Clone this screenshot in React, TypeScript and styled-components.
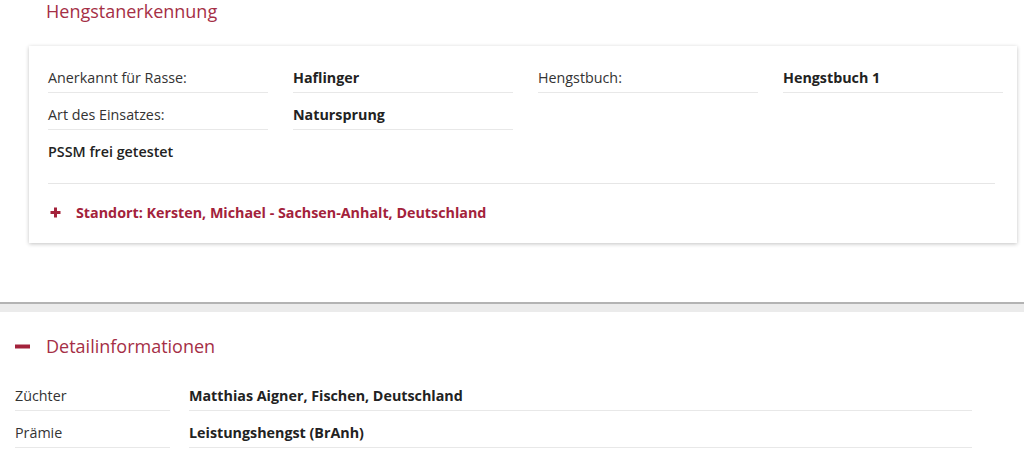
import React from 'react';
import styled, {createGlobalStyle} from "styled-components";

const accent = '#a3223b';

const GlobalStyle = createGlobalStyle`
    body {
        margin: 0;
        background: #fff;
        font-family: 'Open Sans', 'Liberation Sans', sans-serif;
        color: #222;
    }
`

type Field = { label: string; value?: string };

const recognition: Field[][] = [
    [{label: 'Anerkannt für Rasse:', value: 'Haflinger'}, {label: 'Hengstbuch:', value: 'Hengstbuch 1'}],
    [{label: 'Art des Einsatzes:', value: 'Natursprung'}],
];

const details: Field[] = [
    {label: 'Züchter', value: 'Matthias Aigner, Fischen, Deutschland'},
    {label: 'Prämie', value: 'Leistungshengst (BrAnh)'},
];

const PlusIcon = () => (
    <svg width="11" height="11" viewBox="0 0 11 11">
        <path d="M5.5 0.5v10M0.5 5.5h10" stroke={accent} strokeWidth="3"/>
    </svg>
);

const MinusIcon = () => (
    <svg width="15" height="5" viewBox="0 0 15 5">
        <path d="M0 2.5h15" stroke={accent} strokeWidth="4"/>
    </svg>
);

const App = () => {
    return (
        <Page>
            <GlobalStyle/>
            <Recognition>
                <SectionTitle>Hengstanerkennung</SectionTitle>
                <Card>
                    <FieldGrid>
                        {recognition.map((row) =>
                            row.map((f) => (
                                <React.Fragment key={f.label}>
                                    <Cell>{f.label}</Cell>
                                    <Cell bold>{f.value}</Cell>
                                </React.Fragment>
                            ))
                        )}
                    </FieldGrid>
                    <Note>PSSM frei getestet</Note>
                    <Location>
                        <PlusIcon/>
                        <span>Standort: Kersten, Michael - Sachsen-Anhalt, Deutschland</span>
                    </Location>
                </Card>
            </Recognition>
            <Separator/>
            <Details>
                <DetailsTitle>
                    <MinusIcon/>
                    <span>Detailinformationen</span>
                </DetailsTitle>
                {details.map((f) => (
                    <DetailRow key={f.label}>
                        <Cell>{f.label}</Cell>
                        <Cell bold>{f.value}</Cell>
                    </DetailRow>
                ))}
            </Details>
        </Page>
    );
};

export default App;

const Page = styled.div`
    width: 1024px;
    height: 460px;
    overflow: hidden;
`

const Recognition = styled.section`
    padding: 0 7px 0 29px;
    height: 302px;
`

const SectionTitle = styled.h2`
    margin: 0 0 24px 17px;
    font-weight: 400;
    font-size: 18px;
    line-height: 22px;
    color: #a52f46;
`

const Card = styled.div`
    background: #fff;
    padding: 10px 22px 0 19px;
    box-shadow: 0 1px 4px rgba(0, 0, 0, 0.24);
`

const FieldGrid = styled.div`
    display: grid;
    grid-template-columns: repeat(4, 220px);
    column-gap: 25px;
`

const Cell = styled.div<{ bold?: boolean }>`
    height: 37px;
    box-sizing: border-box;
    padding-top: 12px;
    line-height: 20px;
    font-size: 14.3px;
    font-weight: ${p => (p.bold ? 700 : 400)};
    color: ${p => (p.bold ? '#222' : '#333')};
    border-bottom: 1px solid #e8e8e8;
    white-space: nowrap;
    &:empty {
        border-bottom: none;
    }
`

const Note = styled.div`
    padding: 12px 0 21px;
    line-height: 20px;
    font-size: 14.3px;
    font-weight: 600;
    border-bottom: 1px solid #e6e6e6;
`

const Location = styled.div`
    height: 59px;
    box-sizing: border-box;
    padding: 0 0 3px 2px;
    display: flex;
    align-items: center;
    gap: 15px;
    font-size: 14.3px;
    font-weight: 700;
    color: ${accent};
`

const Separator = styled.div`
    height: 8px;
    border-top: 2px solid #b3b3b3;
    background: #ebebeb;
`

const Details = styled.section`
    padding: 21px 0 0 15px;
`

const DetailsTitle = styled.h2`
    margin: 0 0 15px;
    display: flex;
    align-items: center;
    gap: 16px;
    font-weight: 400;
    font-size: 18px;
    line-height: 26px;
    color: #a52f46;
`

const DetailRow = styled.div`
    display: grid;
    grid-template-columns: 155px 783px;
    column-gap: 19px;
`
